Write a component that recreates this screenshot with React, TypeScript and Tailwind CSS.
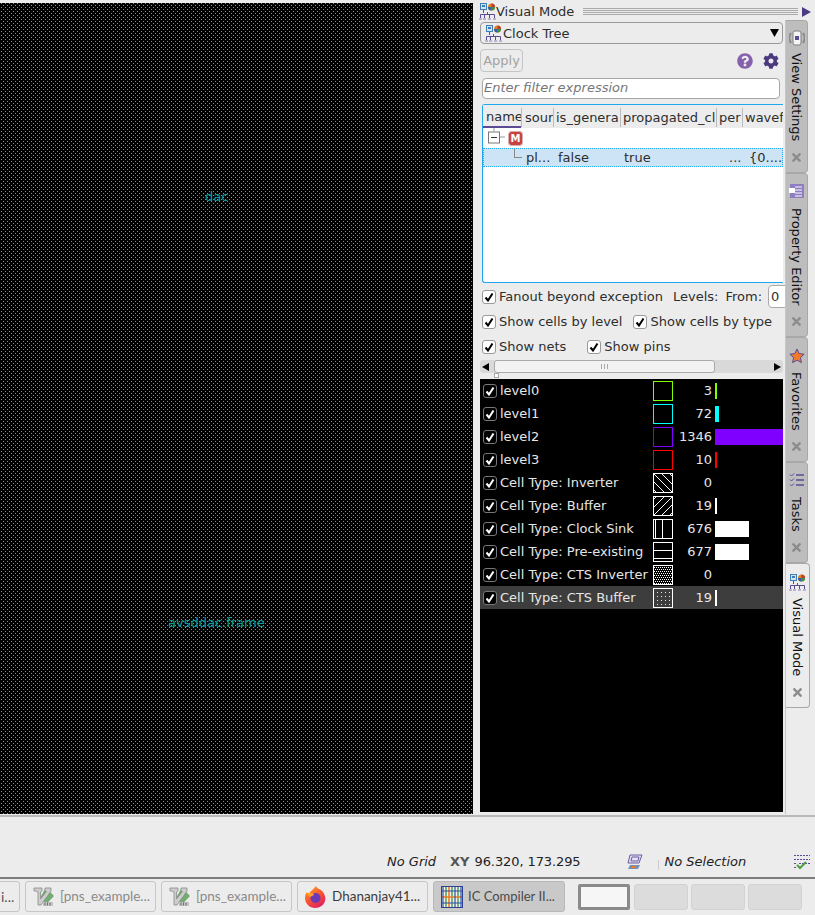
import { FaCog, FaQuestionCircle, FaTimes } from "react-icons/fa";

const FONT = "font-['DejaVu_Sans',sans-serif]";

const ClockTreeIcon = () => (
  <svg width="17" height="17" viewBox="0 0 17 17" fill="none">
    <rect x="1.5" y="0.5" width="6" height="6" fill="#cfe3f5" stroke="#3f7fb5" />
    <rect x="3" y="2" width="3" height="2" fill="#3f7fb5" />
    <circle cx="12.5" cy="4" r="3.5" fill="#d9822b" />
    <path d="M12.5 4V.5a3.5 3.5 0 0 1 3.5 3.5z" fill="#c03a2b" />
    <path d="M12.5 4h3.5a3.5 3.5 0 0 1-3.5 3.5z" fill="#3f8f4f" />
    <path d="M12.5 4v3.5a3.5 3.5 0 0 1-3.5-3.5z" fill="#2f5fa5" />
    <path d="M4.500 7v3M8.500 9v2M1.500 15v-3.500h14V15M5.500 11.500V15M10.500 11.500V15" stroke="#5b4a94" />
    <path d="M0 16h3M4 16h3M9 16h3M14 16h3" stroke="#8a7ab5" />
  </svg>
);

const Check = ({ dark }: { dark?: boolean }) => (
  <span
    className={`flex h-[14px] w-[14px] shrink-0 items-center justify-center rounded-[3px] border ${
      dark ? "border-[#777] bg-black" : "border-[#999] bg-white"
    }`}
  >
    <svg width="10" height="10" viewBox="0 0 10 10" fill="none">
      <path d="M1.500 5.500 4 8.500 8.500 1.500" stroke={dark ? "#fff" : "#000"} strokeWidth="2" />
    </svg>
  </span>
);

const Option = ({ label, className = "" }: { label: string; className?: string }) => (
  <span className={`flex items-center gap-[3px] ${className}`}>
    <Check />
    {label}
  </span>
);

const Swatch = ({ kind, color = "#fff" }: { kind: string; color?: string }) => (
  <svg width="20" height="20" viewBox="0 0 20 20" className="shrink-0">
    <defs>
      <pattern id="fine" width="4" height="4" patternUnits="userSpaceOnUse">
        <rect x="0" y="0" width="1" height="1" fill="#fff" />
        <rect x="2" y="0" width="1" height="1" fill="#fff" />
        <rect x="1" y="2" width="1" height="1" fill="#fff" />
        <rect x="3" y="2" width="1" height="1" fill="#fff" />
      </pattern>
      <pattern id="sparse" width="4" height="4" patternUnits="userSpaceOnUse">
        <rect width="1" height="1" fill="#e6e6e6" />
      </pattern>
    </defs>
    {kind === "back" && <path d="M0 0 20 20M8 0 20 12M0 8 12 20M16 0 20 4M0 16 4 20" stroke="#fff" />}
    {kind === "fwd" && <path d="M0 20 20 0M0 12 12 0M8 20 20 8M0 4 4 0M16 20 20 16" stroke="#fff" />}
    {kind === "vert" && <path d="M2.500 0v20M9.500 0v20" stroke="#fff" />}
    {kind === "horz" && <path d="M0 8.500h20M0 16.500h20" stroke="#fff" />}
    {kind === "fine" && <rect x="1" y="1" width="18" height="18" fill="url(#fine)" />}
    {kind === "sparse" && <rect x="4" y="3" width="14" height="15" fill="url(#sparse)" />}
    <rect x="0.5" y="0.5" width="19" height="19" fill="none" stroke={color} />
  </svg>
);

const legend = [
  { label: "level0", kind: "box", color: "#80ff00", count: "3", bar: 2, barColor: "bg-[#80ff00]" },
  { label: "level1", kind: "box", color: "#00ffff", count: "72", bar: 4, barColor: "bg-[#00ffff]" },
  { label: "level2", kind: "box", color: "#8000ff", count: "1346", bar: 68, barColor: "bg-[#8000ff]" },
  { label: "level3", kind: "box", color: "#ff0000", count: "10", bar: 2, barColor: "bg-[#ff0000]" },
  { label: "Cell Type: Inverter", kind: "back", count: "0", bar: 0, barColor: "bg-white" },
  { label: "Cell Type: Buffer", kind: "fwd", count: "19", bar: 2, barColor: "bg-white" },
  { label: "Cell Type: Clock Sink", kind: "vert", count: "676", bar: 34, barColor: "bg-white" },
  { label: "Cell Type: Pre-existing", kind: "horz", count: "677", bar: 34, barColor: "bg-white" },
  { label: "Cell Type: CTS Inverter", kind: "fine", count: "0", bar: 0, barColor: "bg-white" },
  { label: "Cell Type: CTS Buffer", kind: "sparse", count: "19", bar: 2, barColor: "bg-white", active: true },
];

const LegendRow = ({ row }: { row: (typeof legend)[number] }) => (
  <div className={`flex h-[23px] items-center pl-[3px] text-[#e6e6e6] ${row.active ? "bg-[#3d3d3d]" : ""}`}>
    <Check dark />
    <span className="ml-[3px] w-[153px] whitespace-nowrap">{row.label}</span>
    <Swatch kind={row.kind} color={row.color} />
    <span className="w-[39px] text-right">{row.count}</span>
    {row.bar > 0 && <span className={`ml-[3px] h-4 ${row.barColor}`} style={{ width: row.bar }} />}
  </div>
);

const SideTab = ({
  label,
  icon,
  height,
  active,
  labelGap = "mt-[7px]",
}: {
  label: string;
  icon: React.ReactNode;
  height: string;
  active?: boolean;
  labelGap?: string;
}) => (
  <div
    className={`flex flex-col items-center rounded-r-[4px] border border-l-0 border-[#a8a8a8] pt-[7px] ${height} ${
      active ? "w-[24px] bg-[#ececec]" : "w-[22px] bg-[#bdbdbd]"
    }`}
  >
    <span className="flex h-[20px] items-center">{icon}</span>
    <span className={`${labelGap} text-[13px] text-[#111] [writing-mode:vertical-rl]`}>{label}</span>
    <FaTimes className="mt-auto mb-[8px] text-[13px] text-[#8c8c8c]" />
  </div>
);

const VimIcon = () => (
  <svg width="22" height="24" viewBox="0 0 22 24" className="shrink-0">
    <path d="M14 3 21.500 11 14 19 9 12z" fill="#6fae6f" stroke="#5b8f5b" strokeWidth="0.6" />
    <path d="M2 3h8v3L8.500 7v7l6-7.500L13 6V3h6v3L9 20H6V7L4 6H2z" fill="#cdcdcd" stroke="#8a8a8a" strokeWidth="0.8" />
    <path d="M11 17h10v4H11z" fill="#c4c4c4" />
    <path d="M13 17.500v3M15.500 17.500v3M18 17.500v3" stroke="#6f6f6f" />
  </svg>
);

const FirefoxIcon = () => (
  <svg width="23" height="24" viewBox="0 0 23 24" className="shrink-0">
    <defs>
      <linearGradient id="fx" x1="0" y1="0" x2="0.6" y2="1">
        <stop offset="0" stopColor="#ffb02e" />
        <stop offset="0.55" stopColor="#f9582f" />
        <stop offset="1" stopColor="#e3245c" />
      </linearGradient>
    </defs>
    <path d="M12 1c1 3 5 3 7 6 2 3 3 6 2 9-1 4-5 7-10 7C6 23 1 19 1 13c0-3 1-5 2-6 0 1 1 2 2 2 1-3 4-4 7-8z" fill="url(#fx)" />
    <circle cx="11.500" cy="13" r="5" fill="#6a3bb5" />
    <path d="M3 8h6l1 2-4 2c-1-1-3-2-3-4z" fill="#ff9a2e" />
  </svg>
);

const IcIcon = () => (
  <svg width="22" height="22" viewBox="0 0 22 22" fill="none" className="shrink-0">
    <rect width="22" height="22" fill="#f4f1e6" />
    <path d="M5 0v22M11 0v22M17 0v22" stroke="#3f9b4f" strokeWidth="1.400" />
    <path d="M0 11h22M8 0v22" stroke="#ef7b22" strokeWidth="1.600" />
    <path d="M0 5h22M0 17h22M2 0v22M14 0v22M20 0v22" stroke="#2f4fa5" strokeWidth="1.200" />
    <rect x="0.5" y="0.5" width="21" height="21" stroke="#2f3f95" />
  </svg>
);

const TaskButton = ({
  icon,
  label,
  width,
  dim,
  active,
  className = "",
}: {
  icon?: React.ReactNode;
  label: string;
  width: string;
  dim?: boolean;
  active?: boolean;
  className?: string;
}) => (
  <div
    className={`flex h-[31px] items-center gap-[6px] overflow-hidden rounded-[3px] border pl-[6px] font-['Lato',sans-serif] ${width} ${className} ${
      active ? "border-[#b8b8b8] bg-[#c9c9c9] text-[#4a4a4a]" : "border-[#c6c6c6] bg-[#ececec]"
    } ${dim ? "text-[#8a8a8a]" : active ? "" : "text-[#3c3c3c]"}`}
  >
    {icon}
    <span className="whitespace-nowrap">{label}</span>
  </div>
);

const App = () => {
  return (
    <div className={`flex h-[915px] w-[815px] flex-col overflow-hidden bg-[#ececec] text-[13px] text-[#2e2e2e] ${FONT}`}>
      <div className="h-[3px] shrink-0" />

      <div className="flex h-[811px] shrink-0">
        {/* Layout canvas */}
        <div className="relative h-full w-[473px] shrink-0 bg-black">
          <svg className="absolute inset-0 h-full w-full">
            <defs>
              <pattern id="grid" width="4" height="4" patternUnits="userSpaceOnUse">
                <rect x="1" y="0" width="1" height="1" fill="#0fc4c4" />
                <rect x="3" y="2" width="1" height="1" fill="#0fc4c4" />
              </pattern>
            </defs>
            <rect width="100%" height="100%" fill="url(#grid)" />
          </svg>
          <span className="absolute top-[184px] left-[205px] text-[#0b9c9c]">dac</span>
          <span className="absolute top-[610px] left-[168px] text-[#0b9c9c]">avsddac.frame</span>
        </div>

        {/* Right dock */}
        <div className="flex min-w-0 flex-1 flex-col">
          <div className="flex h-[17px] shrink-0 items-center pl-[6px]">
            <ClockTreeIcon />
            <span>Visual Mode</span>
            <span className="ml-[9px] flex h-[7px] flex-1 flex-col justify-between border-y border-[#aaa]">
              <span className="mt-[1px] h-px bg-[#aaa]" />
              <span className="mb-[1px] h-px bg-[#aaa]" />
            </span>
            <svg width="11" height="10" viewBox="0 0 11 10" className="mx-[3px]">
              <path d="M1 0 10 5 1 10z" fill="#4b3a80" />
            </svg>
          </div>

          <div className="flex min-h-0 flex-1">
            <div className="flex w-[312px] shrink-0 flex-col overflow-hidden pl-[7px]">
              <div className="mt-[2px] flex h-[22px] w-[303px] shrink-0 items-center justify-between rounded-[4px] border border-[#999] pr-[3px] pl-[4px]">
                <span className="flex items-center gap-[1px]">
                  <ClockTreeIcon />
                  <span className="pt-[2px]">Clock Tree</span>
                </span>
                <svg width="9" height="8" viewBox="0 0 9 8">
                  <path d="M0 0h9L4.500 8z" fill="#000" />
                </svg>
              </div>

              <div className="mt-[5px] flex h-[23px] w-[303px] shrink-0 items-center justify-between pr-[4px]">
                <span className="flex h-[23px] w-[43px] items-center justify-center rounded-[4px] border border-[#c4c4c4] text-[#a3a3a3]">
                  Apply
                </span>
                <span className="flex items-center gap-[10px]">
                  <FaQuestionCircle className="text-[16px] text-[#8660ab]" />
                  <FaCog className="text-[16px] text-[#4b3a80]" />
                </span>
              </div>

              <div className="mt-[6px] ml-[2px] flex h-[21px] w-[298px] shrink-0 items-center rounded-[4px] border border-[#a8a8a8] bg-white pb-px pl-[1px] text-[#777] italic">
                Enter filter expression
              </div>

              {/* Tree table */}
              <div className="mt-[5px] ml-[2px] flex h-[179px] w-[301px] shrink-0 flex-col rounded-tl-[3px] rounded-bl-[3px] border border-r-0 border-[#1ea7ef] bg-white">
                <div className="grid h-[23px] shrink-0 grid-cols-[38px_32px_67px_96px_26px_1fr] items-center overflow-hidden bg-[#ececec] pt-[2px] text-[#2e2e2e]">
                  <span className="flex h-full items-center overflow-hidden border-b-2 border-[#5b4a94] pl-[3px]">name</span>
                  <span className="overflow-hidden border-l border-[#bbb] pl-[3px]">sour</span>
                  <span className="overflow-hidden border-l border-[#bbb] pl-[2px] whitespace-nowrap">is_genera</span>
                  <span className="overflow-hidden border-l border-[#bbb] pl-[2px] whitespace-nowrap">propagated_cl</span>
                  <span className="overflow-hidden border-l border-[#bbb] pl-[2px]">per</span>
                  <span className="overflow-hidden border-l border-[#bbb] pl-[2px]">wavef</span>
                </div>
                <div className="flex h-[20px] shrink-0 items-center pl-[5px]">
                  <svg width="28" height="20" viewBox="0 0 28 20" fill="none">
                    <path d="M6 0v3M12 9h5" stroke="#999" />
                    <rect x="0.5" y="4" width="11" height="11" fill="#fff" stroke="#777" />
                    <path d="M3 9.500h6" stroke="#333" />
                  </svg>
                  <span className="-ml-[7px] flex h-[13px] w-[13px] items-center justify-center rounded-[2px] bg-[#c9423f] text-[10px] font-bold text-white outline outline-[#d9b0b0]">
                    M
                  </span>
                </div>
                <div className="grid h-[19px] shrink-0 grid-cols-[74px_66px_100px_25px_1fr] items-center border border-dotted border-[#1ea7ef] bg-[#cde4f7] leading-[15px]">
                  <span className="relative pl-[42px]">
                    <span className="absolute top-[-1px] left-[30px] h-[9px] w-[8px] border-b border-l border-[#888]" />
                    pl...
                  </span>
                  <span>false</span>
                  <span>true</span>
                  <span className="pl-[5px]">...</span>
                  <span className="whitespace-nowrap">{"{0...."}</span>
                </div>
              </div>

              <div className="mt-px flex h-[25px] shrink-0 items-center whitespace-nowrap pl-[2px]">
                <Option label="Fanout beyond exception" />
                <span className="ml-[10px]">Levels:</span>
                <span className="ml-[7px]">From:</span>
                <span className="ml-[6px] flex h-[23px] w-[30px] shrink-0 items-center rounded-[4px] border border-[#aaa] bg-white pl-[2px]">0</span>
              </div>
              <div className="flex h-[25px] shrink-0 items-center gap-[11px] whitespace-nowrap pl-[2px]">
                <Option label="Show cells by level" />
                <Option label="Show cells by type" />
              </div>
              <div className="flex h-[25px] shrink-0 items-center gap-[21px] whitespace-nowrap pl-[2px]">
                <Option label="Show nets" />
                <Option label="Show pins" />
              </div>

              <div className="mt-px flex h-[13px] w-[303px] shrink-0 items-center rounded-[3px] bg-[#d9d9d9] px-[2px]">
                <svg width="8" height="8" viewBox="0 0 8 8" className="shrink-0">
                  <path d="M7 0v8L0 4z" fill="#000" />
                </svg>
                <span className="ml-[4px] flex h-[13px] w-[221px] shrink-0 items-center justify-center rounded-[3px] border border-[#aaa] bg-[#f2f2f2]">
                  <span className="h-[5px] w-[7px] border-x border-[#aaa] bg-[linear-gradient(#aaa,#aaa)] bg-[length:1px_100%] bg-center bg-no-repeat" />
                </span>
                <svg width="8" height="8" viewBox="0 0 8 8" className="ml-auto shrink-0">
                  <path d="M1 0v8L8 4z" fill="#000" />
                </svg>
              </div>
              <span className="ml-[14px] h-[5px] w-[5px] shrink-0 border border-[#aaa] bg-white" />
              <div className="mt-px mb-[2px] w-[303px] flex-1 overflow-hidden bg-black">
                {legend.map((row) => (
                  <LegendRow key={row.label} row={row} />
                ))}
              </div>
            </div>

            {/* Vertical tabs */}
            <div className="flex flex-1 flex-col items-start border-l border-[#c6c6c6]">
              <SideTab
                label="View Settings"
                height="h-[153px]"
                labelGap="mt-[5px]"
                icon={
                  <svg width="16" height="18" viewBox="0 0 16 18" fill="none">
                    <path d="M2 4C0 7 0 11 2 14M14 4c2 3 2 7 0 10" stroke="#8c8c8c" strokeWidth="2" />
                    <rect x="4" y="2" width="8" height="14" rx="2" fill="#f4f4f4" stroke="#7f7f7f" />
                    <rect x="6" y="7" width="4" height="4" fill="#5b4a94" />
                  </svg>
                }
              />
              <SideTab
                label="Property Editor"
                height="h-[164px]"
                icon={
                  <svg width="16" height="16" viewBox="0 0 16 16" fill="none">
                    <rect x="1" y="1" width="14" height="14" fill="#8f7fc0" />
                    <path d="M6 4h7M6 7h7M6 10h7M6 13h7" stroke="#fff" />
                    <rect x="0" y="5" width="6" height="5" fill="#fff" />
                  </svg>
                }
              />
              <SideTab
                label="Favorites"
                height="h-[125px]"
                icon={
                  <svg width="16" height="16" viewBox="0 0 16 16" className="mt-[2px]">
                    <path d="m8 1 2.100 4.600 5 .6-3.700 3.400 1 5L8 12.100 3.600 14.600l1-5L.9 6.200l5-.6z" fill="#f07a2a" stroke="#5b4a94" />
                  </svg>
                }
              />
              <SideTab
                label="Tasks"
                height="h-[101px]"
                icon={
                  <svg width="15" height="15" viewBox="0 0 15 15" fill="none" stroke="#5b4a94">
                    <path d="M7 2h8M7 7h8M7 12h8" strokeWidth="1.500" />
                    <path d="m1 1.500 1.500 1.500L5 .5M1 6.500 2.500 8 5 5.500M1 11.500l1.500 1.500L5 10.500" />
                  </svg>
                }
              />
              <SideTab
                label="Visual Mode"
                height="h-[145px]"
                active
                icon={
                  <span className="mt-[3px]">
                    <ClockTreeIcon />
                  </span>
                }
              />
            </div>
          </div>
        </div>
      </div>

      <div className="mt-px h-[2px] shrink-0 bg-[#b9b9b9]" />

      {/* Status bar */}
      <div className="flex h-[60px] shrink-0 items-end pb-[6px] pl-[387px] whitespace-nowrap text-[#222]">
        <span className="italic">No Grid</span>
        <span className="ml-[14px] font-bold text-[#555]">XY</span>
        <span className="ml-[5px] tracking-[-0.1px]">96.320, 173.295</span>
        <svg width="16" height="16" viewBox="0 0 16 16" fill="none" className="mb-[1px] ml-[46px]">
          <path d="M3 1h12l-3 8H1z" fill="#e4e0f0" stroke="#6a5aa5" />
          <path d="M5 3h7l-1 4H4z" stroke="#6a5aa5" />
          <path d="M3 11h10l-2 4H1z" fill="#7a8fb5" />
          <path d="M5 12h4l-1 2H5z" fill="#d9822b" />
        </svg>
        <span className="mb-[1px] ml-[15px] h-[10px] w-px bg-[#ccc]" />
        <span className="ml-[6px] italic">No Selection</span>
        <svg width="16" height="16" viewBox="0 0 16 16" fill="none" className="mb-[1px] ml-[48px]">
          <path d="M0 1.500h16M0 5.500h16M0 9.500h3M5 9.500h11M0 13.500h3" stroke="#5b4a94" strokeDasharray="2 1" />
          <path d="m3 11 3 3 6-6" stroke="#4f9f3f" strokeWidth="2" />
        </svg>
      </div>

      <div className="h-[2px] shrink-0 bg-[#7d7d7d]" />

      {/* Taskbar */}
      <div className="flex flex-1 items-start pt-[2px]">
        <TaskButton label="i..." width="w-[21px]" className="-ml-px !pl-[1px] rounded-l-none text-[14px] text-[#555]" dim />
        <TaskButton icon={<VimIcon />} label="[pns_example..." width="w-[131px]" className="ml-[5px] text-[13.5px]" dim />
        <TaskButton icon={<VimIcon />} label="[pns_example..." width="w-[131px]" className="ml-[5px] text-[13.5px]" dim />
        <TaskButton icon={<FirefoxIcon />} label="Dhananjay41..." width="w-[131px]" className="ml-[5px] !gap-[5px] text-[13.5px]" />
        <TaskButton icon={<IcIcon />} label="IC Compiler II..." width="w-[132px]" className="ml-[5px] !gap-[5px] !pl-[7px] text-[13px]" active />
        <div className="mt-[3px] ml-[13px] flex items-center gap-[3px]">
          <span className="h-[26px] w-[52px] rounded-[2px] border-[3px] border-[#8a8a8a] bg-[#f6f6f6]" />
          <span className="ml-px h-[26px] w-[54px] rounded-[3px] border border-[#d2d2d2] bg-[#dcdcdc]" />
          <span className="h-[26px] w-[54px] rounded-[3px] border border-[#d2d2d2] bg-[#dcdcdc]" />
          <span className="h-[26px] w-[54px] rounded-[3px] border border-[#d2d2d2] bg-[#dcdcdc]" />
        </div>
      </div>
    </div>
  );
};

export default App;
